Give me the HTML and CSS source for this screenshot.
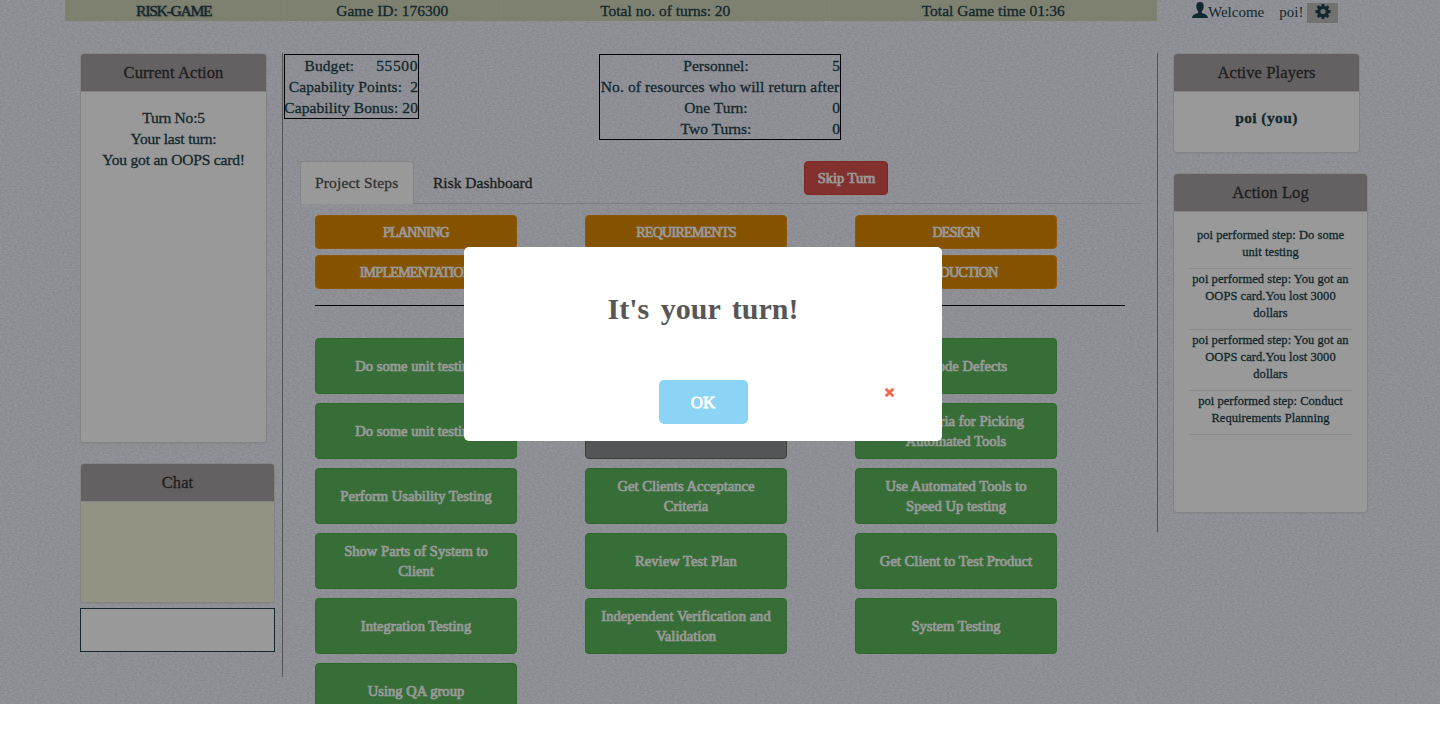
FILE: index.html
```html
<!DOCTYPE html>
<html lang="en">
<head>
<meta charset="utf-8">
<title>Risk-Game</title>
<link rel="stylesheet" href="styles.css">
</head>
<body>
<div class="page">
  <svg class="texture" aria-hidden="true">
    <filter id="weave" x="0" y="0" width="100%" height="100%" color-interpolation-filters="sRGB">
      <feTurbulence type="fractalNoise" baseFrequency="0.4 0.75" numOctaves="2" seed="4"/>
      <feColorMatrix values="0.16 0 0 0 0.845  0.16 0 0 0 0.857  0.16 0 0 0 0.892  0 0 0 0 1"/>
    </filter>
    <rect width="100%" height="100%" filter="url(#weave)"/>
  </svg>

  <header class="topbar">
    <div class="cell brand">RISK-GAME</div>
    <div class="cell">Game ID: 176300</div>
    <div class="cell wide">Total no. of turns: 20</div>
    <div class="cell wide">Total Game time 01:36</div>
    <div class="user">
      <svg class="user-icon" viewBox="0 0 15 15"><path d="M7.500 0C5.200 0 4 1.200 4 3.700c0 2.300.8 4.100 1.900 5.200v1.200C5.200 11 0 11.300 0 15h15c0-3.700-5.200-4-5.900-4.900V8.900c1.100-1.100 1.900-2.900 1.900-5.200C11 1.200 9.800 0 7.500 0z"/></svg>
      <span class="welcome">Welcome</span><span class="name">poi!</span>
      <button class="gear"><svg viewBox="0 0 16 16"><path fill-rule="evenodd" d="M6.700 1h2.600l.3 2 1.200.5 1.700-1.200 1.800 1.800-1.200 1.700.5 1.200 2 .3v2.600l-2 .3-.5 1.200 1.200 1.700-1.800 1.800-1.700-1.200-1.200.5-.3 2H6.700l-.3-2-1.200-.5-1.700 1.200-1.800-1.800 1.200-1.700-.5-1.200-2-.3V7.300l2-.3.5-1.200-1.200-1.700 1.800-1.800 1.700 1.200L6.400 3zM8 5.900a2.600 2.600 0 1 0 0 5.200 2.600 2.600 0 0 0 0-5.200z"/></svg></button>
    </div>
  </header>

  <main class="columns">
    <aside class="left">
      <section class="panel current">
        <h3>Current Action</h3>
        <div class="turn"><p>Turn No:5</p><p>Your last turn:</p><p class="oops">You got an OOPS card!</p></div>
      </section>
      <section class="panel chat"><h3>Chat</h3></section>
      <input class="chat-input" type="text" aria-label="Message">
    </aside>

    <section class="center">
      <div class="stats">
        <div class="budget">
          <div><span>Budget:</span><span class="amount">55500</span></div>
          <div><span>Capability Points:</span><span class="points">2</span></div>
          <div><span>Capability Bonus:</span><span class="bonus">20</span></div>
        </div>
        <div class="personnel">
          <span>Personnel:</span><b>5</b>
          <span class="note">No. of resources who will return after</span>
          <span>One Turn:</span><b>0</b>
          <span>Two Turns:</span><b>0</b>
        </div>
      </div>
      <nav class="tabs">
        <a class="tab active">Project Steps</a>
        <a class="tab">Risk Dashboard</a>
        <button class="btn skip">Skip Turn</button>
      </nav>
      <div class="phases">
        <button class="btn phase">PLANNING</button>
        <button class="btn phase">REQUIREMENTS</button>
        <button class="btn phase">DESIGN</button>
        <button class="btn phase">IMPLEMENTATION</button>
        <button class="btn phase"></button>
        <button class="btn phase">PRODUCTION</button>
      </div>
      <div class="steps">
        <button class="btn step">Do some unit testing</button>
        <button class="btn step"></button>
        <button class="btn step">Fix Code Defects</button>
        <button class="btn step">Do some unit testing</button>
        <button class="btn step used"></button>
        <button class="btn step">Set Criteria for Picking<br>Automated Tools</button>
        <button class="btn step">Perform Usability Testing</button>
        <button class="btn step">Get Clients Acceptance<br>Criteria</button>
        <button class="btn step">Use Automated Tools to<br>Speed Up testing</button>
        <button class="btn step">Show Parts of System to<br>Client</button>
        <button class="btn step">Review Test Plan</button>
        <button class="btn step">Get Client to Test Product</button>
        <button class="btn step">Integration Testing</button>
        <button class="btn step">Independent Verification and<br>Validation</button>
        <button class="btn step">System Testing</button>
        <button class="btn step">Using QA group</button>
      </div>
    </section>

    <aside class="right">
      <section class="panel players"><h3>Active Players</h3><p class="player">poi (you)</p></section>
      <section class="panel log">
        <h3>Action Log</h3>
        <ul>
          <li>poi performed step: Do some<br>unit testing</li>
          <li>poi performed step: You got an<br>OOPS card.You lost 3000<br>dollars</li>
          <li>poi performed step: You got an<br>OOPS card.You lost 3000<br>dollars</li>
          <li>poi performed step: Conduct<br>Requirements Planning</li>
        </ul>
      </section>
    </aside>
  </main>

  <div class="overlay"></div>
  <div class="modal" role="dialog">
    <h2>It's your turn!</h2>
    <button class="ok">OK</button>
    <svg class="close" viewBox="0 0 10 10"><path d="M1.500 1.500l7 7M8.500 1.500l-7 7"/></svg>
  </div>
</div>
</body>
</html>
```

FILE: styles.css
```css
* { box-sizing: border-box; }
body {
  margin: 0;
  background: #fff;
  color: #1e434a;
  font: 15.5px/21px "Liberation Serif", serif;
}
p, h2, h3, ul { margin: 0; padding: 0; font-weight: normal; }
button { font-family: inherit; margin: 0; }

.page { position: relative; height: 704px; overflow: hidden; background: #ebeef8; }
.texture { position: absolute; inset: 0; width: 100%; height: 100%; }
.topbar, .columns { position: relative; display: flex; margin-left: 65px; -webkit-text-stroke: .3px; }

/* Top bar */
.topbar { height: 21px; }
.cell {
  width: 218.500px;
  height: 21px;
  text-align: center;
  background: #d2d5bb;
  border-right: 1px solid #d8dac4;
}
.cell.wide { width: 327.500px; }
.cell.wide + .cell.wide { border-right: 0; }
.brand { text-shadow: 1px 1px 2px #999; -webkit-text-stroke: .4px; letter-spacing: -1.2px; }
.user { display: flex; padding-left: 35px; font-size: 15px; -webkit-text-stroke: 0; }
.user-icon { width: 16px; height: 16px; margin-top: 2px; fill: #1e434a; }
.welcome, .name { padding-top: 2px; }
.name { margin-left: 15px; }
.gear {
  width: 31px;
  height: 20px;
  margin: 3px 0 0 4px;
  padding: 0 8px;
  border: 0;
  background: #bebebe;
}
.gear svg { display: block; width: 16px; height: 16px; margin-top: -4px; fill: #1e434a; }

/* Columns */
.columns { margin-top: 32px; align-items: flex-start; }
.left { width: 217px; padding-left: 15px; }
.center { width: 876px; height: 624px; border-left: 1px solid #888b90; }
.right { width: 217px; height: 479px; padding-left: 15px; border-left: 1px solid #888b90; margin-left: -1px; }

.panel {
  border: 1px solid #ddd;
  border-radius: 4px;
  background: #fff;
  overflow: hidden;
  text-align: center;
  box-shadow: 0 1px 1px rgba(0,0,0,.05);
}
.panel h3 {
  height: 38px;
  border-bottom: 1px solid #ddd;
  background: #a8a0a3;
  color: #333;
  font-size: 16.500px;
  line-height: 38px;
  letter-spacing: .1px;
}
.current { width: 187px; height: 390px; }
.turn { padding-top: 15px; letter-spacing: -.2px; }
.chat { width: 195px; height: 140px; margin-top: 20px; background: #f5f5dc; }
.chat-input { display: block; width: 195px; height: 44px; margin-top: 5px; border: 1px solid #1e434a; background: #fff; }

/* Score boxes */
.stats { display: flex; height: 108px; align-items: flex-start; padding: 1px 0 0 1px; }
.budget, .personnel { border: 1px solid #000; }
.budget { width: 135px; height: 65px; white-space: nowrap; letter-spacing: .1px; }
.budget div { display: flex; justify-content: flex-end; }
.amount { margin-left: 22px; letter-spacing: .6px; }
.points { margin-left: 8px; }
.bonus { margin-left: 4px; }
.personnel {
  display: grid;
  grid-template-columns: 232px 8px;
  grid-auto-rows: 21px;
  width: 242px;
  height: 86px;
  margin-left: 180px;
  text-align: center;
  white-space: nowrap;
}
.personnel b { font-weight: normal; }
.note { grid-column: span 2; letter-spacing: .13px; }

/* Tabs */
.tabs { display: flex; width: 842px; height: 43px; margin-left: 17px; border-bottom: 1px solid #ced0d6; color: #333; }
.tab { height: 42px; padding: 11px 16px 0; }
.active {
  width: 114px;
  height: 43px;
  padding: 10px 0 0 14px;
  margin-right: 3px;
  border: 1px solid #ddd;
  border-bottom: 0;
  border-radius: 4px 4px 0 0;
  background: #fff;
  color: #555;
  letter-spacing: .15px;
}

/* Buttons */
.btn {
  border: 1px solid;
  border-radius: 4px;
  color: #fff;
  padding: 0;
  font-size: 14.500px;
  line-height: 20px;
  -webkit-text-stroke: .7px #fff;
}
.skip { width: 84px; height: 34px; margin-left: 256px; background: #d9534f; border-color: #d43f3a; }
.phases, .steps { display: grid; grid-template-columns: repeat(3, 202px); column-gap: 68px; margin-left: 32px; }
.phases { width: 810px; row-gap: 6px; padding: 11px 0 16px; border-bottom: 1px solid #000; }
.phase { height: 34px; padding-top: 1px; background: #de8a00; border-color: #eb9316; font-size: 14px; letter-spacing: -.7px; }
.steps { row-gap: 9px; padding-top: 32px; }
.step { height: 56px; background: #5cb85c; border-color: #4cae4c; letter-spacing: .05px; }
.used { background: #8c8e91; border-color: #666; }

/* Right column */
.players { width: 187px; height: 100px; }
.player { padding-top: 15px; font-weight: bold; letter-spacing: .4px; }
.log { width: 195px; height: 340px; margin-top: 20px; }
.log ul { list-style: none; padding: 13px 15px 0; font-size: 12.500px; line-height: 17px; letter-spacing: .05px; white-space: nowrap; }
.log li { padding: 2px 0 7px; border-bottom: 1px solid #e6e6e6; }

/* Dialog */
.overlay { position: absolute; inset: 0; background: rgba(0,0,0,.4); }
.modal { position: absolute; left: 464px; top: 247px; width: 478px; height: 194px; border-radius: 5px; background: #fff; text-align: center; }
.modal h2 { padding-top: 42px; font-size: 30px; line-height: 40px; font-weight: bold; color: #575757; word-spacing: 4px; }
.ok {
  width: 89px;
  height: 44px;
  margin-top: 51px;
  padding-top: 2px;
  border: 0;
  border-radius: 5px;
  background: #8cd4f5;
  color: #fff;
  font-size: 17px;
  -webkit-text-stroke: .8px #fff;
}
.close { position: absolute; left: 420px; top: 140px; width: 11px; height: 11px; }
.close path { stroke: #f2684f; stroke-width: 2.600; }
```
